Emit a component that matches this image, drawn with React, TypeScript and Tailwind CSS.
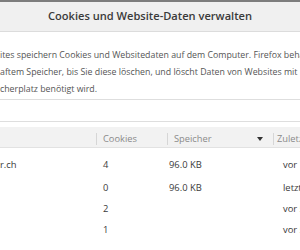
const rows = [
  { site: "r.ch", cookies: "4", size: "96.0 KB", last: "vor 1", h: "h-[23px]" },
  { site: "", cookies: "0", size: "96.0 KB", last: "letzte", h: "h-[22px]" },
  { site: "", cookies: "2", size: "", last: "vor 5", h: "h-[21px]" },
  { site: "", cookies: "1", size: "", last: "vor 5", h: "h-[20px]" },
];

const App = () => {
  return (
    <div className="w-[300px] h-[250px] overflow-hidden bg-white font-['Open_Sans',sans-serif] text-[#4a4a4a]">
      <div className="h-[2px] bg-[#7d7d7d]" />
      <div className="h-[30px] bg-[#f0f0f0] border-b border-[#dcdcdc] flex items-center justify-center">
        <h1 className="text-[11.1px] font-semibold text-[#3a3a3a]">
          Cookies und Website-Daten verwalten
        </h1>
      </div>
      <div className="pt-[15px] text-[8.8px] leading-[17px] text-[#555] whitespace-nowrap">
        <p>ites speichern Cookies und Websitedaten auf dem Computer. Firefox behält</p>
        <p>aftem Speicher, bis Sie diese löschen, und löscht Daten von Websites mit</p>
        <p>cherplatz benötigt wird.</p>
      </div>
      <div className="mt-[1px] h-[23px] border-y border-[#dedede] bg-white" />
      <div className="mt-[5px] h-[21px] pt-[3px] bg-[#f2f2f2] border-b border-[#e2e2e2] grid grid-cols-[96px_71px_106px_1fr] items-center text-[9.3px] text-[#8a8a8a]">
        <div />
        <div className="border-l border-[#d6d6d6] h-[12px] pl-[6px] flex items-center">Cookies</div>
        <div className="border-l border-[#d6d6d6] h-[12px] pl-[6px] pr-[10px] flex items-center justify-between">
          <span>Speicher</span>
          <svg width="6" height="4" viewBox="0 0 6 4">
            <path d="M0 0h6L3 4z" fill="#333" />
          </svg>
        </div>
        <div className="border-l border-[#d6d6d6] h-[12px] pl-[3px] flex items-center whitespace-nowrap">Zuletzt</div>
      </div>
      <div className="pt-[6px] text-[9.4px] text-[#3a3a3a]">
        {rows.map((r, i) => (
          <div key={i} className={`grid grid-cols-[96px_71px_106px_1fr] items-center ${r.h}`}>
            <div>{r.site}</div>
            <div className="pl-[7px]">{r.cookies}</div>
            <div className="pl-[2px]">{r.size}</div>
            <div className="pl-[10px] whitespace-nowrap">{r.last}</div>
          </div>
        ))}
      </div>
    </div>
  );
};

export default App;
